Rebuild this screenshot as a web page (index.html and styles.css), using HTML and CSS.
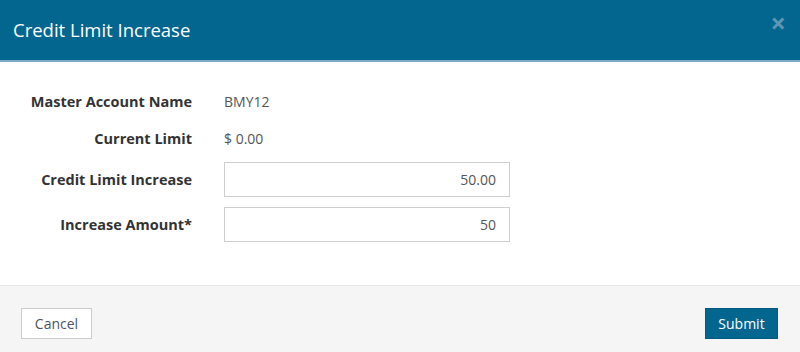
FILE: index.html
```html
<!DOCTYPE html>
<html>
<head>
<meta charset="utf-8">
<link rel="stylesheet" href="styles.css">
</head>
<body>
<div class="modal">
  <div class="modal-header">
    <h4 class="title">Credit Limit Increase</h4>
    <span class="close">&times;</span>
  </div>
  <div class="modal-body">
    <div class="row static r1">
      <div class="label">Master Account Name</div>
      <div class="value">BMY12</div>
    </div>
    <div class="row static r2">
      <div class="label">Current Limit</div>
      <div class="value">$ 0.00</div>
    </div>
    <div class="row field r3">
      <div class="label">Credit Limit Increase</div>
      <div class="input">50.00</div>
    </div>
    <div class="row field r4">
      <div class="label">Increase Amount*</div>
      <div class="input">50</div>
    </div>
  </div>
  <div class="modal-footer">
    <button class="btn btn-default">Cancel</button>
    <button class="btn btn-primary">Submit</button>
  </div>
</div>
</body>
</html>
```

FILE: styles.css
```css
* { box-sizing: border-box; }
html, body {
  margin: 0;
  padding: 0;
  width: 800px;
  height: 352px;
  overflow: hidden;
  background: #fff;
  font-family: "Open Sans", "Liberation Sans", sans-serif;
}
.modal {
  width: 800px;
  height: 352px;
  display: flex;
  flex-direction: column;
}
.modal-header {
  height: 62px;
  background: #03668f;
  border-bottom: 2px solid #7fa9c2;
  display: flex;
  align-items: center;
  justify-content: space-between;
  padding: 0 14px 0 13px;
}
.title {
  margin: 0;
  color: #fff;
  font-size: 18.5px;
  font-weight: 400;
  line-height: 24px;
}
.close {
  color: #5e97b6;
  font-size: 27px;
  font-weight: 700;
  line-height: 1;
  margin-top: -16px;
  margin-right: 0px;
}
.modal-body {
  flex: 1;
  padding-top: 21px;
  border-bottom: 1px solid #e5e5e5;
}
.row {
  display: grid;
  grid-template-columns: 192px 286px;
  column-gap: 32px;
  align-items: center;
  font-size: 14px;
}
.static { height: 37px; }
.r2 { margin-bottom: 5px; }
.field { height: 35px; }
.r3 { margin-bottom: 10px; }
.label {
  text-align: right;
  font-weight: 700;
  font-size: 14.5px;
  color: #333;
}
.value {
  color: #555;
}
.input {
  height: 35px;
  border: 1px solid #cfcfcf;
  background: #fff;
  text-align: right;
  padding: 0 13px;
  line-height: 33px;
  color: #555;
}
.modal-footer {
  height: 66px;
  background: #f5f5f5;
  display: flex;
  justify-content: space-between;
  align-items: flex-start;
  padding: 22px 22px 0 21px;
}
.btn {
  font-family: "Open Sans", "Liberation Sans", sans-serif;
  font-size: 14px;
  height: 31px;
  padding: 0 12px;
  line-height: 29px;
  border-radius: 0;
  cursor: pointer;
}
.btn-default {
  width: 71px;
  background: #fff;
  border: 1px solid #cccccc;
  color: #4a5566;
}
.btn-primary {
  width: 73px;
  background: #03668f;
  border: 1px solid #025a80;
  color: #fff;
}
```
